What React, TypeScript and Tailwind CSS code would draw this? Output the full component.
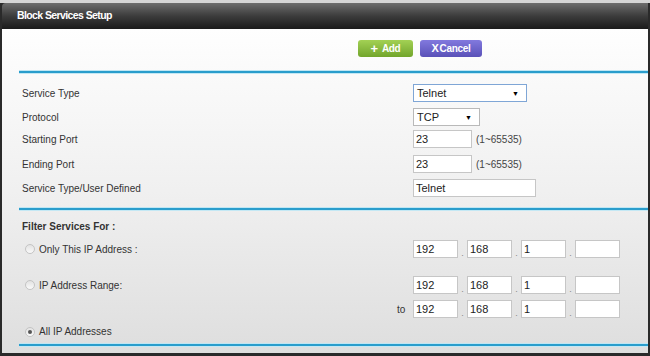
const font = { fontFamily: '"Liberation Sans", Arial, sans-serif' };

function Select({ value, width, focused }: { value: string; width: string; focused?: boolean }) {
  return (
    <div
      className={`flex h-[18px] items-center justify-between bg-white pl-[3px] pr-[7px] text-[11px] text-[#222] ${width} ${
        focused ? 'border border-[#7fa6d6]' : 'border border-[#b9b9b9]'
      }`}
    >
      <span>{value}</span>
      <span className="text-[7px] leading-none text-black">▼</span>
    </div>
  );
}

function TextBox({ value, width }: { value: string; width: string }) {
  return (
    <div className={`flex h-[18px] items-center border border-[#c6c6c6] bg-white pl-[2px] text-[11px] text-[#222] ${width}`}>
      {value}
    </div>
  );
}

function Divider({ className = '' }: { className?: string }) {
  return (
    <div className={`ml-[17px] shrink-0 border-t border-[#bfe6f3] ${className}`}>
      <div className="h-[2px] bg-[#2a9dcc]" />
      <div className="h-px bg-[#c4e8f4]" />
    </div>
  );
}

function IpRow({ parts }: { parts: string[] }) {
  return (
    <div className="flex items-end">
      {parts.map((p, i) => (
        <div key={i} className="flex items-end">
          {i > 0 && <span className="w-[9px] text-center text-[9px] leading-[10px] text-[#888]">.</span>}
          <TextBox value={p} width="w-[45px]" />
        </div>
      ))}
    </div>
  );
}

function Radio({ checked }: { checked?: boolean }) {
  return (
    <span className="flex h-[10px] w-[10px] items-center justify-center rounded-full border border-[#c4c4c4] bg-gradient-to-b from-[#e2e2e2] to-[#fafafa]">
      {checked && <span className="h-[4px] w-[4px] rounded-full bg-[#555]" />}
    </span>
  );
}

function PortBox() {
  return (
    <div className="flex items-center gap-[4px]">
      <TextBox value="23" width="w-[59px]" />
      <span className="text-[10px] text-[#444]">(1~65535)</span>
    </div>
  );
}

const rows: { label: string; control: React.ReactNode; top: string }[] = [
  { label: 'Service Type', control: <Select value="Telnet" width="w-[114px]" focused />, top: 'mt-[10px]' },
  { label: 'Protocol', control: <Select value="TCP" width="w-[67px]" />, top: 'mt-[6px]' },
  { label: 'Starting Port', control: <PortBox />, top: 'mt-[4px]' },
  { label: 'Ending Port', control: <PortBox />, top: 'mt-[7px]' },
  { label: 'Service Type/User Defined', control: <TextBox value="Telnet" width="w-[123px]" />, top: 'mt-[6px]' },
];

export default function App() {
  return (
    <div className="h-[356px] w-[650px] overflow-hidden border-t-[3px] border-[#d6d6d6] bg-[#2a2a2a]" style={font}>
      <div className="ml-[2px] mr-[2px] flex h-[350px] flex-col">
        <div className="flex h-[26px] shrink-0 items-center rounded-tl-[4px] bg-gradient-to-b from-[#6e6e6e] via-[#3c3c3c] to-[#1b1b1b] pl-[15px]">
          <span className="text-[10.5px] font-bold tracking-[-0.6px] text-white">Block Services Setup</span>
        </div>
        <div className="flex flex-1 flex-col bg-gradient-to-b from-[#fefefe] via-[#f0f0f0] to-[#dedede]">
          <div className="mt-[11px] flex shrink-0 gap-[7px] pl-[356px]">
            <div className="flex h-[17px] w-[55px] items-center justify-center rounded-[3px] bg-gradient-to-b from-[#a3d154] to-[#72a52b] text-[10px] font-bold tracking-[-0.3px] text-white">
              <span className="mr-[4px] text-[13px] font-black leading-none">+</span>Add
            </div>
            <div className="flex h-[17px] w-[62px] items-center justify-center rounded-[3px] bg-gradient-to-b from-[#8279de] to-[#5a51b8] text-[10px] font-bold tracking-[-0.3px] text-white">
              <span className="mr-[1px] text-[11px] leading-none">X</span>Cancel
            </div>
          </div>
          <Divider className="mt-[13px]" />
          <div className="flex shrink-0 flex-col pl-[20px]">
            {rows.map((r) => (
              <div key={r.label} className={`flex items-center ${r.top}`}>
                <span className="w-[391px] text-[10px] text-[#333]">{r.label}</span>
                {r.control}
              </div>
            ))}
          </div>
          <Divider className="mt-[10px]" />
          <div className="mt-[8px] pl-[20px] text-[10px] leading-[15px] font-bold text-[#333]">Filter Services For :</div>
          <div className="mt-[6px] flex items-center pl-[23px]">
            <Radio />
            <span className="ml-[4px] w-[374px] text-[10px] text-[#333]">Only This IP Address :</span>
            <IpRow parts={['192', '168', '1', '']} />
          </div>
          <div className="mt-[18px] flex items-center pl-[23px]">
            <Radio />
            <span className="ml-[4px] w-[374px] text-[10px] text-[#333]">IP Address Range:</span>
            <IpRow parts={['192', '168', '1', '']} />
          </div>
          <div className="mt-[6px] flex items-center pl-[395px]">
            <span className="w-[16px] text-[10px] text-[#333]">to</span>
            <IpRow parts={['192', '168', '1', '']} />
          </div>
          <div className="mt-[6px] flex items-center pl-[23px]">
            <Radio checked />
            <span className="ml-[4px] text-[10px] leading-[15px] text-[#333]">All IP Addresses</span>
          </div>
          <Divider className="mt-[4px]" />
        </div>
      </div>
    </div>
  );
}
